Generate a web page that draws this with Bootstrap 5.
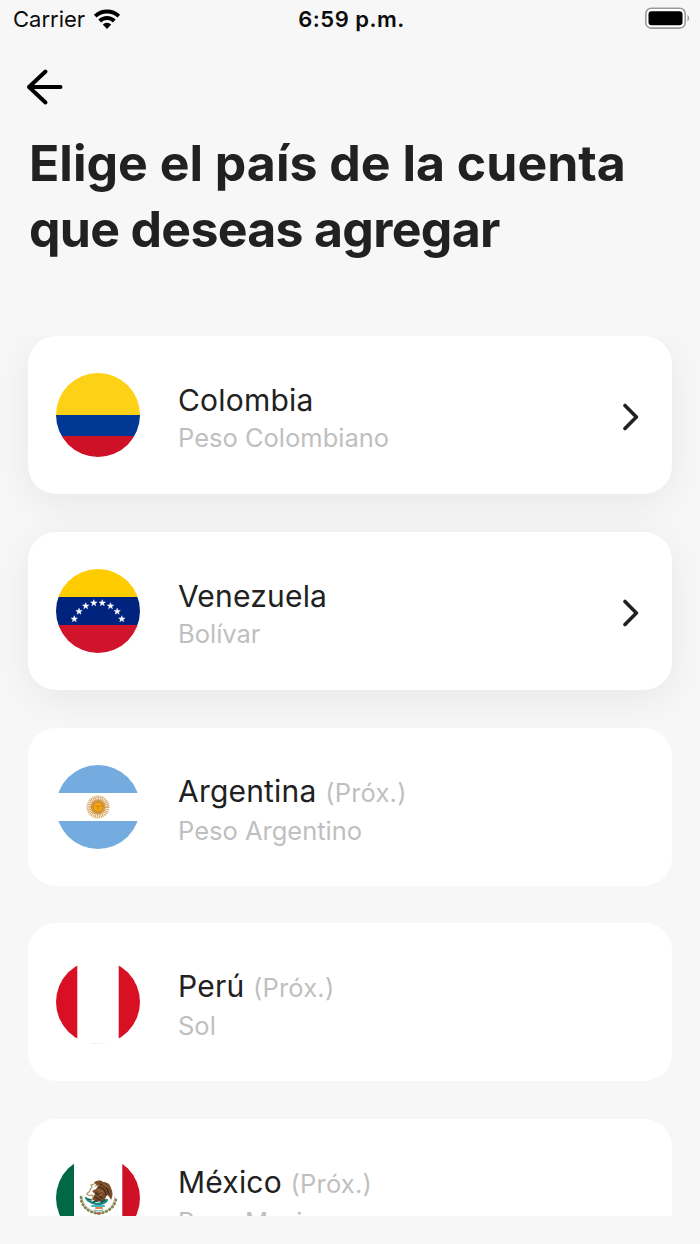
<!DOCTYPE html>
<html lang="es">
<head>
<meta charset="utf-8">
<meta name="viewport" content="width=device-width, initial-scale=1">
<title>Elige el país</title>
<link href="https://cdn.jsdelivr.net/npm/bootstrap@5.3.0/dist/css/bootstrap.min.css" rel="stylesheet">
<style>
  body { background: #f7f7f7; color: #212121; font-family: Inter, "Liberation Sans", sans-serif; }
  .phone { width: 700px; height: 1244px; }
  .status { height: 38px; padding: 0 10px 0 13px; color: #0c0c0c; font-size: 22px; line-height: 38px; }
  .carrier { letter-spacing: 0; }
  .clock { font-weight: 600; letter-spacing: .5px; }
  .back { height: 92px; padding: 30px 0 0 26px; }
  .title { font-size: 50px; font-weight: 750; line-height: 66px; height: 206px; padding: 0 28px 0 29px; white-space: nowrap; }
  .title-end { letter-spacing: -.7px; }
  .accounts { height: 880px; padding: 0 28px; gap: 37.75px; }
  .account { --bs-card-border-width: 0; --bs-card-border-radius: 28px; --bs-card-bg: #fff; height: 158px; flex: none; padding: 0 32px 0 28px; }
  .ready { box-shadow: 0 9px 42px rgba(0, 0, 0, .068); }
  .flag { width: 84px; height: 84px; margin-right: 38px; flex: none; }
  .labels { padding-top: 6px; white-space: nowrap; }
  .country { font-size: 30px; line-height: 40px; letter-spacing: .2px; }
  .soon, .currency { color: #bfbfbf; font-size: 25.5px; letter-spacing: 0; }
  .soon { letter-spacing: .2px; }
  .currency { line-height: 36px; }
</style>
</head>
<body>
<div class="phone overflow-hidden d-flex flex-column">
  <header class="status row g-0 flex-nowrap">
    <div class="col d-flex align-items-center">
      <span class="carrier">Carrier</span>
      <svg width="30" height="22" viewBox="0 0 30 22" style="margin-left:8px" fill="none" stroke="#000" stroke-width="3.9">
        <path d="M2.200 8.200a17 17 0 0 1 23.600 0M6.700 13a10.500 10.500 0 0 1 14.600 0"/>
        <path d="M9.800 16.500a5.800 5.800 0 0 1 8.400 0L14 20.900z" fill="#000" stroke="none"/>
      </svg>
    </div>
    <div class="col-auto clock">6:59 p.m.</div>
    <div class="col d-flex justify-content-end align-items-center">
      <svg width="46" height="24" viewBox="0 0 46 24">
        <rect x="1.800" y="1.300" width="39.400" height="19.800" rx="5.400" fill="#fff" stroke="#9b9b9b" stroke-width="1.600"/>
        <rect x="4.500" y="4.200" width="34" height="14" rx="3" fill="#000"/>
        <path d="M43.500 7.700v7q1.600-1.200 1.600-3.500t-1.600-3.500" fill="#9b9b9b"/>
      </svg>
    </div>
  </header>

  <div class="back">
    <svg class="d-block" width="38" height="38" viewBox="0 0 38 38" fill="none" stroke="#000" stroke-width="4" stroke-linecap="round" stroke-linejoin="round"><path d="M34.500 19H3M19.500 3.500L3 19l16.500 15.500"/></svg>
  </div>

  <h1 class="title m-0">Elige el país de la cuenta<br><span class="title-end">que deseas agregar</span></h1>

  <main class="accounts overflow-hidden d-flex flex-column">
    <a class="card account ready flex-row align-items-center text-decoration-none text-reset" href="#">
      <svg class="flag" viewBox="0 0 84 84"><defs><clipPath id="disc"><circle cx="42" cy="42" r="42"/></clipPath></defs>
        <g clip-path="url(#disc)"><path fill="#fcd116" d="M0 0h84v42H0z"/><path fill="#003893" d="M0 42h84v21H0z"/><path fill="#ce1126" d="M0 63h84v21H0z"/></g></svg>
      <div class="labels flex-grow-1"><div class="country">Colombia</div><div class="currency">Peso Colombiano</div></div>
      <svg class="chevron" width="20" height="32" viewBox="0 0 20 32" fill="none" stroke="#212121" stroke-width="3.600" stroke-linecap="round" stroke-linejoin="round"><path d="M5 6.500L16.400 18 5 29.500"/></svg>
    </a>
    <a class="card account ready flex-row align-items-center text-decoration-none text-reset" href="#">
      <svg class="flag" viewBox="0 0 84 84">
        <defs><path id="star" fill="#fff" stroke="#fff" stroke-width=".5" d="M0-3.300L.8-1.050 3.140-1 1.300.45 1.940 2.670 0 1.360-1.940 2.670-1.300.45-3.140-1-.8-1.050z"/></defs>
        <g clip-path="url(#disc)"><path fill="#fc0" d="M0 0h84v28H0z"/><path fill="#00247d" d="M0 28h84v28H0z"/><path fill="#cf142b" d="M0 56h84v28H0z"/></g>
        <use href="#star" x="18.300" y="50"/><use href="#star" x="23" y="42.500"/><use href="#star" x="29.700" y="37"/><use href="#star" x="37.800" y="34"/><use href="#star" x="46.300" y="34"/><use href="#star" x="54.500" y="37"/><use href="#star" x="61.200" y="42.500"/><use href="#star" x="65.800" y="50"/>
      </svg>
      <div class="labels flex-grow-1"><div class="country">Venezuela</div><div class="currency">Bolívar</div></div>
      <svg class="chevron" width="20" height="32" viewBox="0 0 20 32" fill="none" stroke="#212121" stroke-width="3.600" stroke-linecap="round" stroke-linejoin="round"><path d="M5 6.500L16.400 18 5 29.500"/></svg>
    </a>
    <div class="card account flex-row align-items-center">
      <svg class="flag" viewBox="0 0 84 84"><g clip-path="url(#disc)"><path fill="#74acdf" d="M0 0h84v28H0zM0 56h84v28H0z"/></g>
        <circle cx="42" cy="42" r="8.300" fill="none" stroke="#d9a865" stroke-width="6.400" stroke-dasharray="1 .63"/>
        <circle cx="42" cy="42" r="6.300" fill="none" stroke="#c9842b" stroke-width="2.500" stroke-opacity=".7"/>
        <circle cx="42" cy="42" r="4.800" fill="#f6a90b" stroke="#b96d0b" stroke-width=".8"/>
        <path d="M39.500 41h2M42.700 41h2M41 44h2.200M42 41v2" stroke="#a9650d" stroke-width=".7"/></svg>
      <div class="labels"><div class="country">Argentina <span class="soon">(Próx.)</span></div><div class="currency">Peso Argentino</div></div>
    </div>
    <div class="card account flex-row align-items-center">
      <svg class="flag" viewBox="0 0 84 84"><g clip-path="url(#disc)"><path fill="#d91023" d="M0 0h21.300v84H0zM62.700 0H84v84H62.700z"/></g><path d="M35 83.400q7 .8 14 0" fill="none" stroke="#fbe6e8" stroke-width=".8"/></svg>
      <div class="labels"><div class="country">Perú <span class="soon">(Próx.)</span></div><div class="currency">Sol</div></div>
    </div>
    <div class="card account flex-row align-items-center">
      <svg class="flag" viewBox="0 0 84 84" fill="none" stroke-linecap="round"><g clip-path="url(#disc)"><path fill="#006847" d="M0 0h18v84H0z"/><path fill="#ce1126" d="M66.300 0H84v84H66.300z"/></g>
        <!-- laurel and oak wreath -->
        <path d="M25 41c0 9 7 15.500 17.500 16.500C53 56.500 60 50 60 41" stroke="#7c8148" stroke-width="2.600" stroke-dasharray=".8 3" />
        <path d="M26 41c1 9 7 14.500 16.500 15.500C52 55.500 58 50 59 41" stroke="#a4a276" stroke-width=".8"/>
        <!-- eagle -->
        <path fill="#7a4c29" d="M38 27c2-3 7-3 9-1 4 0 7 2 8 6 2 4 2 8 0 12-1-2-2-4-4-5l-3 6-8 1-4-3 3-5-3-3 4-2 2-3z"/>
        <path d="M44 28c5 1 8 5 9 10M43 31c4 1 7 4 7 8M40 37l6 5M39 41l5 3" stroke="#40291b" stroke-width="1.200"/>
        <path d="M42 34l5 2M39 30l4-1M47 28l4 3M43 40l3-2" stroke="#ae7949" stroke-width=".9"/>
        <path d="M38 28l-3 1 1 2M36 32c-3 0-1 3-3 4s-3 2-1 3 4-1 5 1-2 3-1 4" stroke="#a9884b" stroke-width="1.100"/>
        <!-- cactus, lake and ribbon -->
        <path d="M30 42c3 5 7 5 11 6 4 0 8-1 10-4" stroke="#168b86" stroke-width="2.300"/>
        <path d="M32 43l3 1M37 46l4-1M45 46l4-2" stroke="#165e49" stroke-width="1.700"/>
        <path d="M36 50h12" stroke="#49b5c0" stroke-width="2"/>
        <path d="M40 52h6" stroke="#e68342" stroke-width="2"/>
        <path d="M38 54l4 1 5-1" stroke="#58afc0" stroke-width="1"/>
        <path d="M41 57.500h3" stroke="#bb4e3d" stroke-width="1.500"/></svg>
      <div class="labels"><div class="country">México <span class="soon">(Próx.)</span></div><div class="currency">Peso Mexicano</div></div>
    </div>
  </main>
</div>
<script src="https://cdn.jsdelivr.net/npm/bootstrap@5.3.0/dist/js/bootstrap.bundle.min.js"></script>
</body>
</html>
